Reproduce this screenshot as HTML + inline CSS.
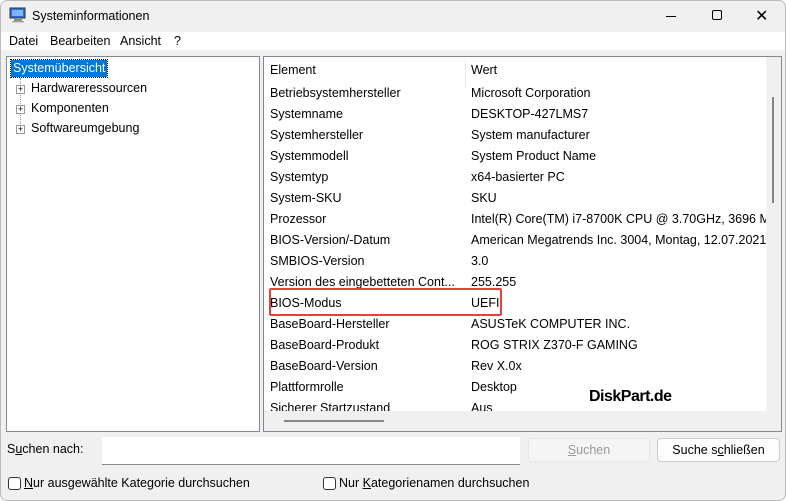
<!DOCTYPE html>
<html><head><meta charset="utf-8"><style>
*{margin:0;padding:0;box-sizing:border-box}
body{width:786px;height:501px;background:#fff;font-family:"Liberation Sans",sans-serif;font-size:12.5px;color:#000;position:relative;overflow:hidden}
.win{position:absolute;left:0;top:0;width:786px;height:501px;background:#f0f0f0;border:1px solid #bbb;border-radius:7px;overflow:hidden}
.abs{position:absolute;white-space:nowrap}
.menu{position:absolute;left:0;top:31px;width:786px;height:18px;background:#fff}
.pane{position:absolute;background:#fff;border:1px solid #828790}
.row{position:absolute;left:6px;height:21px;line-height:21px;white-space:nowrap}
.row span{position:absolute;left:201px;white-space:nowrap}
.btn{position:absolute;height:24px;border:1px solid #ccc;border-radius:4px;background:#fdfdfd;text-align:center;line-height:22px}
.cb{position:absolute;width:13px;height:13px;border:1px solid #333;border-radius:3px;background:#fff}
.plus{position:absolute;width:9px;height:9px;border:1px solid #999;background:#fff;font-size:9px;line-height:7px;text-align:center;color:#000}
</style></head><body><div class="win">
<svg class="abs" style="left:8px;top:6px" width="18" height="16"><rect x="1" y="1" width="15" height="10" fill="#2a6fd6" stroke="#333" stroke-width="1"/><rect x="3" y="3" width="11" height="6" fill="#7fb5f5"/><rect x="5" y="12" width="8" height="2" fill="#888"/><rect x="3" y="14" width="12" height="1.5" fill="#aaa"/></svg>
<div class="abs" style="left:31px;top:8px">Systeminformationen</div>
<div class="abs" style="left:665px;top:15px;width:10px;height:1px;background:#000"></div>
<div class="abs" style="left:711px;top:9px;width:10px;height:10px;border:1px solid #000;border-radius:2px"></div>
<div class="abs" style="left:754px;top:5px;font-size:16px">✕</div>
<div class="menu"><div class="abs" style="left:8px;top:2px">Datei</div><div class="abs" style="left:49px;top:2px">Bearbeiten</div><div class="abs" style="left:119px;top:2px">Ansicht</div><div class="abs" style="left:173px;top:2px">?</div></div>
<div class="pane" style="left:5px;top:55px;width:254px;height:376px">
<div class="abs" style="left:4px;top:3px;background:#0078d7;color:#fff;padding:0 2px;height:17px;line-height:17px;outline:1px dotted #000">Systemübersicht</div>
<div class="abs" style="left:13px;top:21px;height:52px;border-left:1px dotted #999"></div>
<div class="plus" style="left:9px;top:28px">+</div><div class="abs" style="left:24px;top:24px">Hardwareressourcen</div>
<div class="plus" style="left:9px;top:48px">+</div><div class="abs" style="left:24px;top:44px">Komponenten</div>
<div class="plus" style="left:9px;top:68px">+</div><div class="abs" style="left:24px;top:64px">Softwareumgebung</div>
</div>
<div class="pane" style="left:262px;top:55px;width:519px;height:376px;overflow:hidden">
<div class="abs" style="left:201px;top:4px;height:26px;border-left:1px solid #e5e5e5"></div>
<div class="row" style="top:3px">Element<span>Wert</span></div>
<div class="row" style="top:26px">Betriebsystemhersteller<span>Microsoft Corporation</span></div>
<div class="row" style="top:47px">Systemname<span>DESKTOP-427LMS7</span></div>
<div class="row" style="top:68px">Systemhersteller<span>System manufacturer</span></div>
<div class="row" style="top:89px">Systemmodell<span>System Product Name</span></div>
<div class="row" style="top:110px">Systemtyp<span>x64-basierter PC</span></div>
<div class="row" style="top:131px">System-SKU<span>SKU</span></div>
<div class="row" style="top:152px">Prozessor<span>Intel(R) Core(TM) i7-8700K CPU @ 3.70GHz, 3696 MHz</span></div>
<div class="row" style="top:173px">BIOS-Version/-Datum<span>American Megatrends Inc. 3004, Montag, 12.07.2021</span></div>
<div class="row" style="top:194px">SMBIOS-Version<span>3.0</span></div>
<div class="row" style="top:215px">Version des eingebetteten Cont...<span>255.255</span></div>
<div class="row" style="top:236px">BIOS-Modus<span>UEFI</span></div>
<div class="row" style="top:257px">BaseBoard-Hersteller<span>ASUSTeK COMPUTER INC.</span></div>
<div class="row" style="top:278px">BaseBoard-Produkt<span>ROG STRIX Z370-F GAMING</span></div>
<div class="row" style="top:299px">BaseBoard-Version<span>Rev X.0x</span></div>
<div class="row" style="top:320px">Plattformrolle<span>Desktop</span></div>
<div class="row" style="top:341px">Sicherer Startzustand<span>Aus</span></div>
<div class="abs" style="left:5px;top:231px;width:233px;height:28px;border:2px solid #e8403f;border-radius:2px"></div>
<div class="abs" style="left:502px;top:0;width:17px;height:376px;background:#f0f0f0"></div>
<div class="abs" style="left:508px;top:40px;width:2px;height:106px;background:#858585"></div>
<div class="abs" style="left:0;top:354px;width:502px;height:22px;background:#f0f0f0"></div>
<div class="abs" style="left:20px;top:363px;width:100px;height:2px;background:#858585"></div>
<div class="abs" style="left:325px;top:331px;font-weight:bold;font-size:16px;letter-spacing:-0.5px">DiskPart.de</div>
</div>
<div class="abs" style="left:6px;top:441px">S<u>u</u>chen nach:</div>
<div class="abs" style="left:101px;top:436px;width:418px;height:28px;background:#fff;border-bottom:1px solid #888"></div>
<div class="btn" style="left:527px;top:437px;width:122px;color:#999;background:#f5f5f5;border-color:#e5e5e5"><u>S</u>uchen</div>
<div class="btn" style="left:656px;top:437px;width:123px">Suche s<u>c</u>hließen</div>
<div class="cb" style="left:7px;top:476px"></div><div class="abs" style="left:23px;top:475px"><u>N</u>ur ausgewählte Kategorie durchsuchen</div>
<div class="cb" style="left:322px;top:476px"></div><div class="abs" style="left:338px;top:475px">Nur <u>K</u>ategorienamen durchsuchen</div>
</div></body></html>
